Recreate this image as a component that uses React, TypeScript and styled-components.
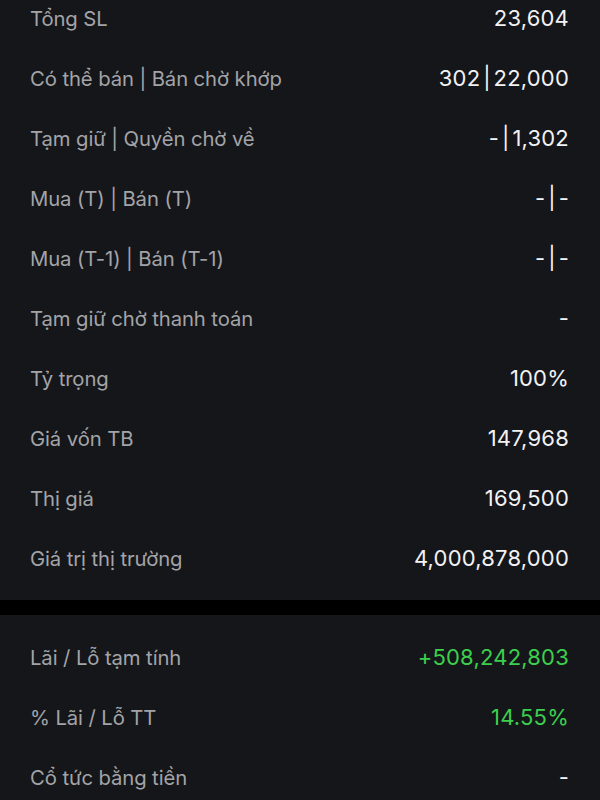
import React from 'react'
import styled, { createGlobalStyle } from 'styled-components'

const GlobalStyle = createGlobalStyle`
  html, body {
    margin: 0;
    padding: 0;
    background: #000;
    overflow: hidden;
  }
  body {
    font-family: Inter, 'Noto Sans', sans-serif;
    -webkit-font-smoothing: antialiased;
  }
`

const Page = styled.div`
  width: 600px;
  height: 800px;
  overflow: hidden;
  background: #000;
`

const Stack = styled.div`
  margin-top: -24px;
  display: flex;
  flex-direction: column;
  gap: 15px;
`

const Section = styled.section`
  background: #151619;
  padding: 12px 0;
`

const Row = styled.div`
  height: 60px;
  display: flex;
  align-items: center;
  justify-content: space-between;
  padding: 0 31px 0 30px;
`

const Label = styled.span`
  color: #a3a4a8;
  font-size: 20.3px;
  letter-spacing: -0.1px;
`

const Value = styled.span<{ $positive?: boolean }>`
  color: ${({ $positive }) => ($positive ? '#3ccf4e' : '#f2f2f4')};
  font-size: 22px;
  letter-spacing: 0.2px;
  word-spacing: -3.5px;
`

type Item = {
  label: string
  value: string
  positive?: boolean
}

const holdings: Item[] = [
  { label: 'Tổng SL', value: '23,604' },
  { label: 'Có thể bán | Bán chờ khớp', value: '302 | 22,000' },
  { label: 'Tạm giữ | Quyền chờ về', value: '- | 1,302' },
  { label: 'Mua (T) | Bán (T)', value: '- | -' },
  { label: 'Mua (T-1) | Bán (T-1)', value: '- | -' },
  { label: 'Tạm giữ chờ thanh toán', value: '-' },
  { label: 'Tỷ trọng', value: '100%' },
  { label: 'Giá vốn TB', value: '147,968' },
  { label: 'Thị giá', value: '169,500' },
  { label: 'Giá trị thị trường', value: '4,000,878,000' },
]

const profit: Item[] = [
  { label: 'Lãi / Lỗ tạm tính', value: '+508,242,803', positive: true },
  { label: '% Lãi / Lỗ TT', value: '14.55%', positive: true },
  { label: 'Cổ tức bằng tiền', value: '-' },
]

function InfoSection({ items }: { items: Item[] }) {
  return (
    <Section>
      {items.map((item) => (
        <Row key={item.label}>
          <Label>{item.label}</Label>
          <Value $positive={item.positive}>{item.value}</Value>
        </Row>
      ))}
    </Section>
  )
}

export default function App() {
  return (
    <Page>
      <GlobalStyle />
      <Stack>
        <InfoSection items={holdings} />
        <InfoSection items={profit} />
      </Stack>
    </Page>
  )
}
